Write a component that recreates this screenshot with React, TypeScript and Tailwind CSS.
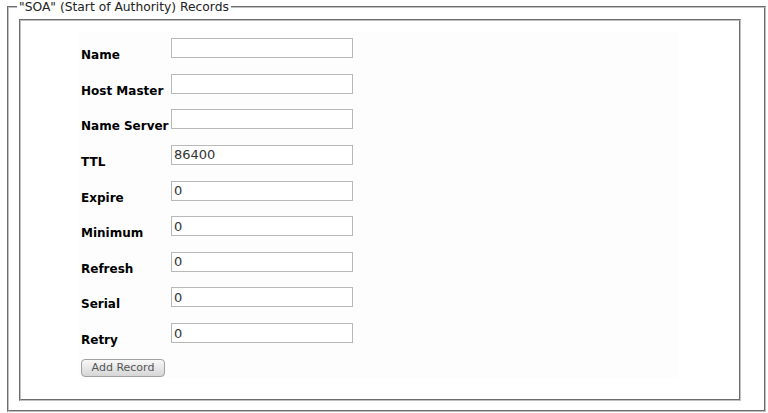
import React from "react";

const rows: { label: string; value: string }[] = [
  { label: "Name", value: "" },
  { label: "Host Master", value: "" },
  { label: "Name Server", value: "" },
  { label: "TTL", value: "86400" },
  { label: "Expire", value: "0" },
  { label: "Minimum", value: "0" },
  { label: "Refresh", value: "0" },
  { label: "Serial", value: "0" },
  { label: "Retry", value: "0" },
];

export default function App() {
  return (
    <div className="w-[768px] h-[413px] bg-white overflow-hidden font-['DejaVu_Sans',sans-serif]">
      <fieldset className="ml-[7px] w-[759px] border-2 [border-style:groove] border-[#c0c0c0] pl-[10px] pt-[5px] pb-[9px]">
        <legend className="ml-[-2px] px-[2px] text-[12.3px] leading-[14px] text-[#222]">
          "SOA" (Start of Authority) Records
        </legend>
        <div className="w-[722px] h-[382px] border-2 [border-style:groove] border-[#c0c0c0] pt-[11px]">
          <div className="ml-[58px] w-[600px] h-[347px] bg-[#fdfdfd]">
            {rows.map((r) => (
              <div key={r.label} className="flex h-[35.625px]">
                <div className="w-[92px] pl-[2px] pt-[16px] text-[12px] leading-[14px] font-bold text-black whitespace-nowrap">
                  {r.label}
                </div>
                <div className="pt-[6px]">
                  <input
                    type="text"
                    defaultValue={r.value}
                    className="block w-[182px] h-[20px] border border-[#b8b8b8] bg-white px-[2px] text-[13px] leading-[16px] text-[#333] outline-none font-['DejaVu_Sans',sans-serif]"
                  />
                </div>
              </div>
            ))}
            <div className="pl-[2px] pt-[6.4px]">
              <button className="block w-[84px] h-[18px] rounded-[4px] border border-[#a0a0a0] bg-gradient-to-b from-[#f8f8f8] to-[#d6d6d6] text-[11px] leading-[14px] text-[#555] font-['DejaVu_Sans',sans-serif]">
                Add Record
              </button>
            </div>
          </div>
        </div>
      </fieldset>
    </div>
  );
}
